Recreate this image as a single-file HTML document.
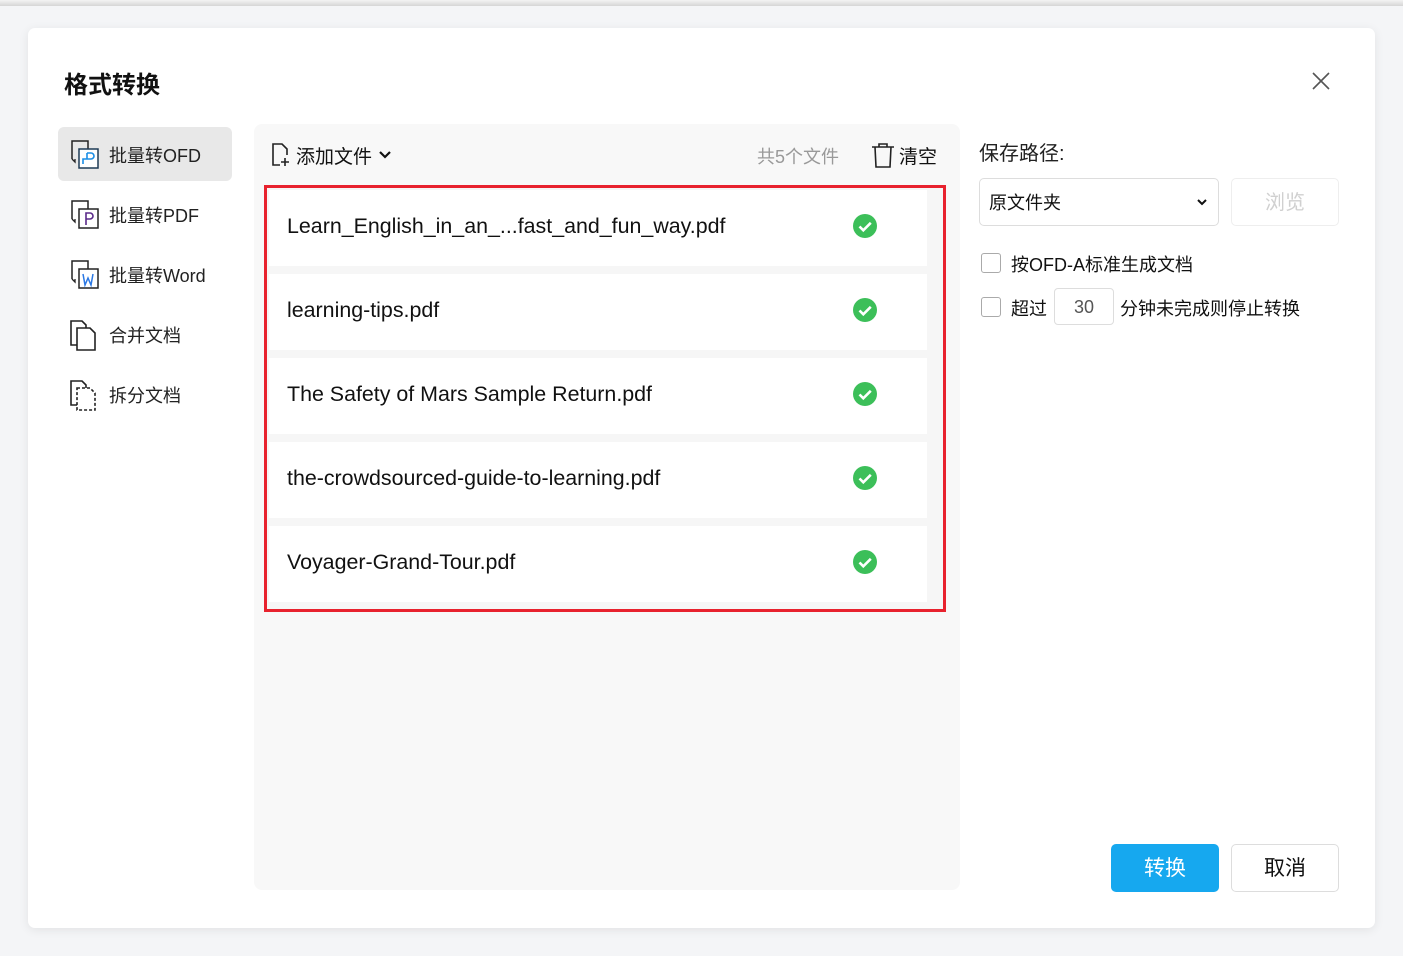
<!DOCTYPE html>
<html><head><meta charset="utf-8"><style>
*{margin:0;padding:0;box-sizing:border-box}
body{width:1403px;height:956px;background:#f4f5f7;font-family:"Liberation Sans","Noto Sans CJK SC",sans-serif;position:relative;overflow:hidden;color:#222}
.top{position:absolute;left:0;top:0;width:1403px;height:6px;background:linear-gradient(#f4f4f4,#d6d6d6)}
.dlg{position:absolute;left:28px;top:28px;width:1347px;height:900px;background:#fff;border-radius:7px;box-shadow:0 2px 10px rgba(0,0,0,.08)}
.abs{position:absolute}
.title{left:36px;top:37px;font-size:24px;font-weight:bold;color:#111}
.close{left:1284px;top:44px}
.nav{left:30px;width:174px;height:54px;border-radius:6px;font-size:18px;line-height:58px;padding-left:51px;color:#222}
.nav svg{position:absolute;left:11px;top:12px}
.act{background:#e8e8e8}
.panel{left:226px;top:96px;width:706px;height:766px;background:#f8f8f8;border-radius:8px}
.red{left:236px;top:157px;width:682px;height:427px;border:3px solid #e8222e;background:#f6f6f6}
.row{position:absolute;left:2px;width:658px;height:76px;background:#fff;font-size:21.4px;line-height:72px;padding-left:18px;color:#111}
.chk{position:absolute;left:584px;top:24px}
.cb{width:20px;height:20px;border:1.5px solid #aaa;border-radius:3px;background:#fff}
</style></head><body>
<div class="top"></div>
<div class="dlg">
<div class="abs title">格式转换</div>
<svg class="abs close" width="18" height="18" viewBox="0 0 18 18"><path d="M1 1L17 17M17 1L1 17" stroke="#555" stroke-width="1.6"/></svg>

<div class="abs nav act" style="top:99px"><svg width="32" height="32" viewBox="0 0 32 32"><path d="M3 20V2h16v8" fill="none" stroke="#222" stroke-width="1.5"/><path d="M3 20l3 3v-3" fill="none" stroke="#222" stroke-width="1.3"/><rect x="10" y="10" width="19" height="19" fill="#fff" stroke="#1d3a55" stroke-width="1.5"/><path d="M18 14h4a3 3 0 010 6h-4v-6M14 25v-5h4" fill="none" stroke="#1a8ee6" stroke-width="1.6"/></svg>批量转OFD</div>
<div class="abs nav" style="top:159px"><svg width="32" height="32" viewBox="0 0 32 32"><path d="M3 20V2h16v8" fill="none" stroke="#222" stroke-width="1.5"/><path d="M3 20l3 3v-3" fill="none" stroke="#222" stroke-width="1.3"/><rect x="10" y="10" width="19" height="19" fill="#fff" stroke="#222" stroke-width="1.5"/><path d="M17 26V14h4a3 3 0 010 6h-4" fill="none" stroke="#5a2a8a" stroke-width="1.6"/></svg>批量转PDF</div>
<div class="abs nav" style="top:219px"><svg width="32" height="32" viewBox="0 0 32 32"><path d="M3 20V2h16v8" fill="none" stroke="#222" stroke-width="1.5"/><path d="M3 20l3 3v-3" fill="none" stroke="#222" stroke-width="1.3"/><rect x="10" y="10" width="19" height="19" fill="#fff" stroke="#222" stroke-width="1.5"/><path d="M14 15l2 11 3-7 3 7 2-11" fill="none" stroke="#2b78e4" stroke-width="1.5"/></svg>批量转Word</div>
<div class="abs nav" style="top:279px"><svg width="32" height="32" viewBox="0 0 32 32"><path d="M2 2h11l4 4v20H2z" fill="none" stroke="#222" stroke-width="1.6"/><path d="M8 9h13l5 5v17H8z" fill="#fff" stroke="#222" stroke-width="1.6"/></svg>合并文档</div>
<div class="abs nav" style="top:339px"><svg width="32" height="32" viewBox="0 0 32 32"><path d="M2 2h11l4 4v20H2z" fill="none" stroke="#222" stroke-width="1.6"/><path d="M8 9h13l5 5v17H8z" fill="#fff" stroke="#222" stroke-width="1.6" stroke-dasharray="3 2"/></svg>拆分文档</div>

<div class="abs panel"></div>
<svg class="abs" style="left:243px;top:114px" width="20" height="26" viewBox="0 0 20 26"><path d="M9 23H2V2h9l5 5v6" fill="none" stroke="#222" stroke-width="1.6"/><path d="M14 16v8M10 20h8" stroke="#222" stroke-width="1.6"/></svg>
<div class="abs" style="left:268px;top:114px;font-size:19px;color:#111">添加文件</div>
<svg class="abs" style="left:350px;top:121px" width="14" height="12" viewBox="0 0 14 12"><path d="M2 3l5 5 5-5" fill="none" stroke="#111" stroke-width="2.2"/></svg>
<div class="abs" style="left:729px;top:115px;font-size:18px;color:#999">共5个文件</div>
<svg class="abs" style="left:843px;top:114px" width="24" height="27" viewBox="0 0 24 27"><path d="M1 5h22M8 5V2h8v3M4 5l1 20h14l1-20" fill="none" stroke="#222" stroke-width="1.6"/></svg>
<div class="abs" style="left:871px;top:114px;font-size:19px;color:#111">清空</div>

<div class="abs red">
<div class="row" style="top:2px">Learn_English_in_an_...fast_and_fun_way.pdf<svg class="chk" width="24" height="24"><circle cx="12" cy="12" r="12" fill="#3cbf59"/><path d="M6.5 12.5l3.8 3.8 7.5-7.5" fill="none" stroke="#fff" stroke-width="2.6"/></svg></div>
<div class="row" style="top:86px">learning-tips.pdf<svg class="chk" width="24" height="24"><circle cx="12" cy="12" r="12" fill="#3cbf59"/><path d="M6.5 12.5l3.8 3.8 7.5-7.5" fill="none" stroke="#fff" stroke-width="2.6"/></svg></div>
<div class="row" style="top:170px">The Safety of Mars Sample Return.pdf<svg class="chk" width="24" height="24"><circle cx="12" cy="12" r="12" fill="#3cbf59"/><path d="M6.5 12.5l3.8 3.8 7.5-7.5" fill="none" stroke="#fff" stroke-width="2.6"/></svg></div>
<div class="row" style="top:254px">the-crowdsourced-guide-to-learning.pdf<svg class="chk" width="24" height="24"><circle cx="12" cy="12" r="12" fill="#3cbf59"/><path d="M6.5 12.5l3.8 3.8 7.5-7.5" fill="none" stroke="#fff" stroke-width="2.6"/></svg></div>
<div class="row" style="top:338px">Voyager-Grand-Tour.pdf<svg class="chk" width="24" height="24"><circle cx="12" cy="12" r="12" fill="#3cbf59"/><path d="M6.5 12.5l3.8 3.8 7.5-7.5" fill="none" stroke="#fff" stroke-width="2.6"/></svg></div>
</div>

<div class="abs" style="left:951px;top:109px;font-size:20px;color:#222">保存路径:</div>
<div class="abs" style="left:951px;top:150px;width:240px;height:48px;border:1px solid #ddd;border-radius:5px;font-size:18px;line-height:48px;padding-left:9px;color:#111">原文件夹</div>
<svg class="abs" style="left:1169px;top:170px" width="10" height="8" viewBox="0 0 10 8"><path d="M1 2l4 4 4-4" fill="none" stroke="#111" stroke-width="2"/></svg>
<div class="abs" style="left:1203px;top:150px;width:108px;height:48px;border:1px solid #eee;border-radius:5px;font-size:20px;line-height:48px;text-align:center;color:#d0d0d0">浏览</div>

<div class="abs cb" style="left:953px;top:225px"></div>
<div class="abs" style="left:983px;top:223px;font-size:18px;color:#111">按OFD-A标准生成文档</div>
<div class="abs cb" style="left:953px;top:269px"></div>
<div class="abs" style="left:983px;top:267px;font-size:18px;color:#111">超过</div>
<div class="abs" style="left:1026px;top:260px;width:60px;height:37px;border:1px solid #ddd;border-radius:4px;font-size:18px;line-height:37px;text-align:center;color:#555">30</div>
<div class="abs" style="left:1092px;top:267px;font-size:18px;color:#111">分钟未完成则停止转换</div>

<div class="abs" style="left:1083px;top:816px;width:108px;height:48px;background:#16a8ef;border-radius:5px;color:#fff;font-size:21px;line-height:50px;text-align:center">转换</div>
<div class="abs" style="left:1203px;top:816px;width:108px;height:48px;border:1px solid #ddd;border-radius:5px;color:#111;font-size:21px;line-height:48px;text-align:center">取消</div>
</div>
</body></html>
